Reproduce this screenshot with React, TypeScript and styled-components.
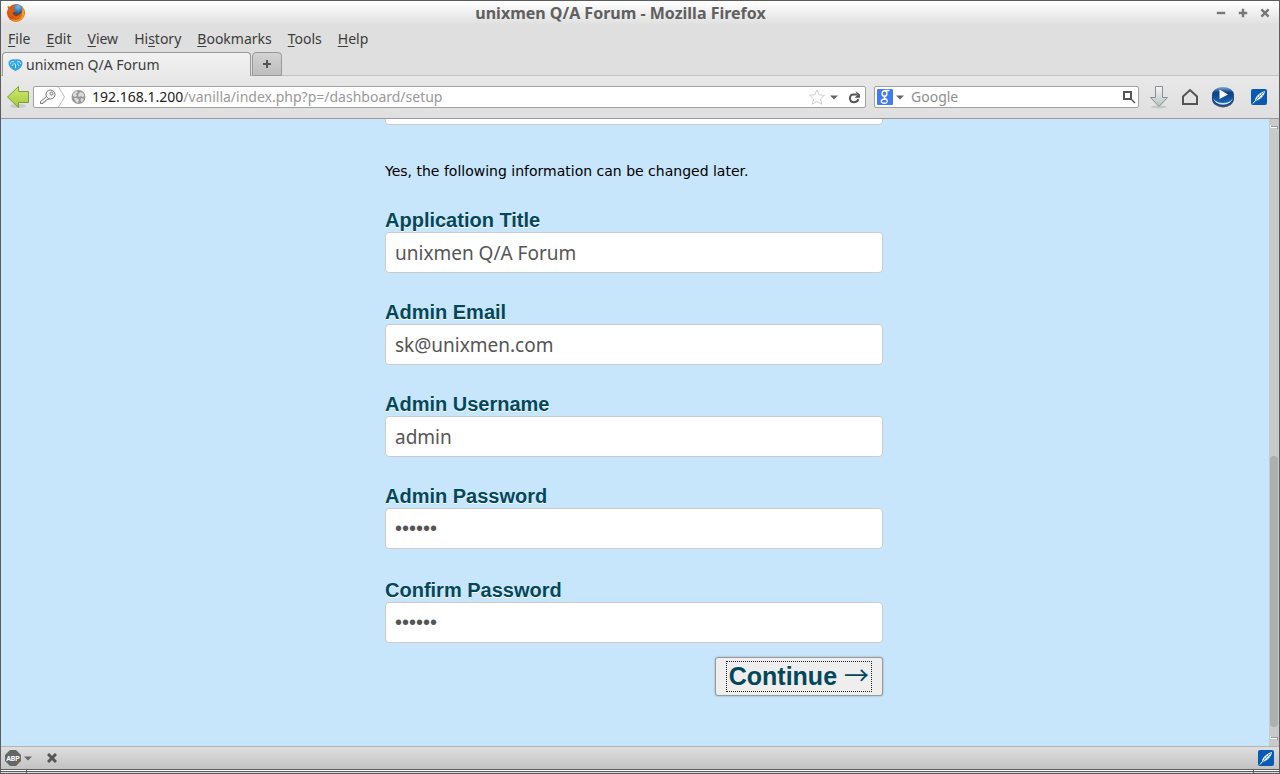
import React from "react";
import styled, { createGlobalStyle, css } from "styled-components";

const Global = createGlobalStyle`
  *, *::before, *::after { box-sizing: border-box; }
  body { margin: 0; font-family: "Noto Sans", "Open Sans", sans-serif; background: #dfdfdf; }
  button, input { font-family: inherit; }
  button { padding: 0; border: 0; background: none; color: inherit; }
  svg { display: block; flex: none; }
`;

const Window = styled.div`
  display: flex;
  flex-direction: column;
  height: 100vh;
  min-height: 480px;
  border: 1px solid #5c5c5c;
  border-bottom: 0;
  background: #dfdfdf;
  color: #3c3c3c;
  overflow: hidden;
`;

const TitleBar = styled.header`
  flex: none;
  display: flex;
  align-items: center;
  height: 24px;
  padding: 0 8px 0 5px;
  background: linear-gradient(#fff, #dfdfdf);
`;

const WindowTitle = styled.h1`
  flex: 1;
  margin: 0;
  font-size: 16px;
  line-height: 20px;
  font-weight: 700;
  text-align: center;
  color: #606060;
  white-space: nowrap;
`;

const WindowButtons = styled.div`
  display: flex;
  justify-content: flex-end;
  gap: 10px;
`;

const IconButton = styled.button`
  display: flex;
  flex: none;
  align-items: center;
  justify-content: center;
`;

const MenuBar = styled.nav`
  flex: none;
  display: flex;
  align-items: center;
  gap: 16px;
  height: 26px;
  padding: 2px 7px 0;
`;

const MenuItem = styled.button`
  font-size: 14px;
  line-height: 20px;
  color: #3c3c3c;
  u { text-underline-offset: 2px; }
`;

const TabStrip = styled.div`
  flex: none;
  display: flex;
  align-items: flex-end;
  gap: 1px;
  height: 25px;
  padding-left: 1px;
  box-shadow: inset 0 -1px #c3c3c3;
`;

const Tab = styled.button<{ $active?: boolean }>`
  display: flex;
  align-items: center;
  gap: 3px;
  height: 24px;
  border: 1px solid #999;
  border-radius: 4px 4px 0 0;
  font-size: 14px;
  line-height: 20px;
  color: #3c3c3c;
  ${(p) =>
    p.$active
      ? css`width: 249px; padding: 0 5px; border-bottom: 0; background: linear-gradient(#f2f2f2, #e8e8e8);`
      : css`width: 30px; justify-content: center; background: linear-gradient(#d2d2d2, #bebebe);`}
`;

const Toolbar = styled.div`
  flex: none;
  display: flex;
  align-items: center;
  height: 43px;
  padding: 0 12px 0 4px;
  border-bottom: 1px solid #9a9a9a;
  background: linear-gradient(#e8e8e8, #dfdfdf);
`;

const Field = styled.div`
  display: flex;
  align-items: center;
  height: 22px;
  border: 1px solid #a2a2a2;
  border-radius: 2px;
  background: #fff;
  overflow: hidden;
`;

const AddressField = styled(Field)`
  flex: 1;
  margin-left: 4px;
  padding-right: 4px;
`;

const SearchField = styled(Field)`
  flex: none;
  width: 265px;
  margin-left: 8px;
  padding: 0 2px;
`;

const Address = styled.div`
  flex: 1;
  margin-left: 6px;
  font-size: 14px;
  line-height: 20px;
  color: #999;
  white-space: nowrap;
  overflow: hidden;
  b { font-weight: 400; color: #222; }
`;

const SearchInput = styled.input`
  flex: 1;
  min-width: 0;
  margin-left: 4px;
  padding: 0;
  border: 0;
  font-size: 14px;
  line-height: 20px;
  background: none;
  &::placeholder { color: #8e8e8e; opacity: 1; }
`;

const ToolButtons = styled.div`
  display: flex;
  align-items: center;
  gap: 12px;
  margin-left: 10px;
`;

const AddonButton = styled(IconButton)`
  margin-left: 4px;
`;

const Viewport = styled.div`
  flex: 1;
  min-height: 0;
  display: flex;
  background: #c7e6fb;
`;

const Page = styled.main`
  flex: 1;
  min-width: 0;
  display: flex;
  flex-direction: column;
  justify-content: flex-end;
  align-items: center;
  padding-bottom: 50px;
  overflow: hidden;
`;

const Form = styled.form`
  flex: none;
  display: flex;
  flex-direction: column;
  width: 500px;
  max-width: 100%;
  padding-right: 2px;
`;

const TextBox = styled.input`
  width: 100%;
  height: 41px;
  padding: 0 9px;
  border: 1px solid #ccc;
  border-radius: 4px;
  background: #fff;
  font-size: 19px;
  color: #555;
  outline: none;
  &[type="password"] { font-family: "Liberation Sans", Arial, sans-serif; font-size: 20px; }
`;

const Note = styled.p`
  margin: 36px 0 27px;
  font-family: "DejaVu Sans", sans-serif;
  font-size: 14px;
  line-height: 20px;
  color: #000;
`;

const Row = styled.div<{ $gap?: number }>`
  display: flex;
  flex-direction: column;
  margin-bottom: ${(p) => p.$gap ?? 27}px;
`;

const Label = styled.label`
  font-family: "Liberation Sans", Arial, sans-serif;
  font-size: 20px;
  line-height: 24px;
  font-weight: 700;
  color: #02475a;
  text-shadow: 0 1px 0 #fff;
`;

const Continue = styled.button`
  display: flex;
  align-items: center;
  align-self: flex-end;
  height: 39px;
  padding: 0 10px;
  border: 1px solid #999;
  border-radius: 3px;
  background: #eee;
  box-shadow: 0 0 2px #999;
  font-family: "Liberation Sans", Arial, sans-serif;
  font-size: 25px;
  line-height: 29px;
  font-weight: 700;
  color: #02475a;
`;

const FocusRing = styled.span`
  height: 31px;
  padding: 0 2px;
  border: 1px dotted #222;
  white-space: nowrap;
`;

const Arrow = styled.span`
  font-family: "Noto Sans CJK JP", sans-serif;
  font-weight: 400;
  line-height: 1;
`;

const ScrollTrack = styled.div`
  flex: none;
  display: flex;
  flex-direction: column;
  align-items: center;
  width: 10px;
  padding: 6px 0;
  background: #c9c9c9;
`;

const ScrollThumb = styled.div`
  width: 8px;
  height: 44%;
  margin: auto 0 9px;
  border-radius: 4px;
  background: #afafaf;
`;

const StatusBar = styled.footer`
  flex: none;
  display: flex;
  align-items: center;
  height: 23px;
  padding: 0 5px 0 4px;
  border-top: 1px solid #b4b4b4;
  background: linear-gradient(#dedede, #c3c3c3);
`;

const CloseAddonBar = styled(IconButton)`
  margin: 0 auto 0 12px;
`;

const Frame = styled.div`
  flex: none;
  display: flex;
  justify-content: space-between;
  height: 5px;
  padding: 0 25px;
  border-top: 1px solid #5c5c5c;
  border-bottom: 1px solid #5c5c5c;
  background: linear-gradient(#fff 1px, #5c5c5c 1px, #5c5c5c 2px, #ddd 2px);
`;

const Notch = styled.span`
  width: 1px;
  background: #5c5c5c;
`;

const DropWrap = styled.span<{ $tight?: boolean }>`
  display: flex;
  padding: ${(p) => (p.$tight ? "0 3px" : "0 10px 0 5px")};
`;

const FirefoxIcon = () => (
  <svg width="20" height="20" viewBox="0 0 20 20" aria-hidden="true">
    <defs>
      <radialGradient id="globe" cx=".6" cy=".25" r=".7">
        <stop offset="0" stopColor="#6fc3ef" /><stop offset="1" stopColor="#1d4f93" />
      </radialGradient>
      <linearGradient id="fox" x1="0" y1="0" x2="1" y2="1">
        <stop offset="0" stopColor="#dd6a14" /><stop offset=".5" stopColor="#cf4b0d" /><stop offset="1" stopColor="#f39a1c" />
      </linearGradient>
    </defs>
    <circle cx="10" cy="10" r="9" fill="url(#fox)" />
    <path d="M14 2.500c3.500 2 4.800 5.500 4 9-.6 2.500-2 4.500-4 5.500 1.800-2.500 2.500-5 2-8-.3-2.500-1-4.500-2-6.500z" fill="#f8b52c" opacity=".75" />
    <circle cx="11" cy="6.500" r="5.300" fill="url(#globe)" />
    <path d="M1.500 3c1 .2 1.500.8 2.500 1.200C6 3.200 8 3.500 9 4.800c-1 .5-1.500 1.200-1 2l2 .8c-.8 1.200-2.300 1.400-3 2.200.2 2 2 2.800 3.800 2.400L9 15 3 13z" fill="#d85f14" />
    <path d="M7 9.800c.2 2 2 3 4 2.600 2-.5 3.500-2 3.600-4" fill="none" stroke="#8f2f08" />
    <path d="M3 14c3 3.500 10 4.500 14 0-2 5.500-11 6.500-14 0z" fill="#f8a92c" opacity=".6" />
  </svg>
);

const BackIcon = () => (
  <svg width="24" height="24" viewBox="0 0 24 24" aria-hidden="true">
    <defs><linearGradient id="green" x1="0" y1="0" x2="0" y2="1"><stop offset="0" stopColor="#d4e86e" /><stop offset="1" stopColor="#a3c93a" /></linearGradient></defs>
    <ellipse cx="13" cy="21" rx="8" ry="2" fill="#bbb" opacity=".6" />
    <path d="M2.500 12 13.500 1.500v5h10v11h-10v5z" fill="url(#green)" stroke="#7d9c45" strokeLinejoin="round" />
  </svg>
);

const IdentityIcon = () => (
  <svg width="36" height="20" viewBox="0 0 36 20" aria-hidden="true">
    <path d="M24.500 0l6 10-6 10" fill="none" stroke="#bbb" />
    <g fill="#f5f5f5" stroke="#777">
      <path d="M13 9 6.500 14.500v2H9l.5-1.500H11l.5-1.500L16 11.500" />
      <circle cx="16.500" cy="7.500" r="4.500" />
      <circle cx="17.500" cy="6.500" r="1.500" />
    </g>
  </svg>
);

const GlobeIcon = () => (
  <svg width="16" height="16" viewBox="0 0 16 16" aria-hidden="true">
    <circle cx="8.500" cy="8" r="7" fill="#989898" />
    <path d="M3 5l3-3 2 1-2 2 1 2-2 1-2-1zM10 3l3 1 1.500 3-2 1-1.500-1-2 1-1-2zM4 9l3 0 2 2-1 3-2-1zM11 9l3 1-2 3-1.500-1z" fill="#dcdcdc" />
  </svg>
);

const DropIcon = () => (
  <svg width="8" height="5" viewBox="0 0 8 5" aria-hidden="true"><path d="M0 .5h8L4 4.500z" fill="#666" /></svg>
);

const StarIcon = () => (
  <svg width="16" height="16" viewBox="0 0 16 16" aria-hidden="true">
    <path d="M8 .8l2.200 5 5.300.5-4 3.600 1.200 5.300L8 12.400l-4.700 2.800 1.200-5.300-4-3.600 5.300-.5z" fill="#fff" stroke="#cfcfcf" strokeLinejoin="round" />
  </svg>
);

const ReloadIcon = () => (
  <svg width="13" height="13" viewBox="0 0 13 13" aria-hidden="true">
    <path d="M9 3.500H5.500C3.300 3.500 2 5 2 7.200S3.500 11.200 6 11.200s4-1.200 4.300-3" fill="none" stroke="#555" strokeWidth="2" />
    <path d="M7.500 0 12 3.500v3.200H6.500L9.500 4z" fill="#555" />
  </svg>
);

const GoogleIcon = () => (
  <svg width="16" height="16" viewBox="0 0 16 16" aria-hidden="true">
    <rect width="16" height="16" rx="1" fill="#4279f6" />
    <g fill="none" stroke="#fff" strokeWidth="1.400">
      <ellipse cx="7.500" cy="4.500" rx="2.400" ry="2.800" />
      <path d="M8 1.500h4.500M8.500 7.200c-2 .8-1.500 1.600.2 2.600 2.600 1.500 1.800 4.500-1.400 4.500-3 0-4-2.300-2-3.600 1-.6 2.200-.7 3.200-.7" />
    </g>
  </svg>
);

const SearchIcon = () => (
  <svg width="14" height="14" viewBox="0 0 14 14" aria-hidden="true">
    <path d="M2 2h7v7H2z" fill="none" stroke="#555" strokeWidth="2" /><path d="M9 9l4 4" stroke="#555" strokeWidth="1.500" />
  </svg>
);

const DownloadIcon = () => (
  <svg width="20" height="24" viewBox="0 0 20 24" aria-hidden="true">
    <defs><linearGradient id="silver" x1="0" y1="0" x2="0" y2="1"><stop offset="0" stopColor="#f5f5f5" /><stop offset="1" stopColor="#b9c1c4" /></linearGradient></defs>
    <ellipse cx="10" cy="22" rx="8" ry="1.500" fill="#bbb" opacity=".7" />
    <path d="M6.500 1.500h7v11h5L10 21.500 1.500 12.500h5z" fill="url(#silver)" stroke="#8a8f90" strokeLinejoin="round" />
  </svg>
);

const HomeIcon = () => (
  <svg width="18" height="18" viewBox="0 0 18 18" aria-hidden="true">
    <path d="M2 16V8.500L9 2l7 6.500V16z" fill="none" stroke="#555" strokeWidth="2" />
  </svg>
);

const PlayIcon = () => (
  <svg width="24" height="22" viewBox="0 0 24 22" aria-hidden="true">
    <defs><linearGradient id="disc" x1="0" y1="0" x2="0" y2="1"><stop offset="0" stopColor="#7ba8d8" /><stop offset=".35" stopColor="#0b3f85" /><stop offset="1" stopColor="#1b65b8" /></linearGradient></defs>
    <ellipse cx="12" cy="13" rx="11" ry="8.500" fill="#4a5568" />
    <ellipse cx="12" cy="11.500" rx="11" ry="8.500" fill="#0b3f85" />
    <ellipse cx="12" cy="10.800" rx="10" ry="8" fill="#c4e6fa" />
    <ellipse cx="12" cy="9" rx="11" ry="8" fill="url(#disc)" />
    <path d="M8.500 3.500v9.500l8.500-4.500z" fill="#fff" />
  </svg>
);

const FeatherIcon = () => (
  <svg width="16" height="16" viewBox="0 0 16 16" aria-hidden="true">
    <rect width="16" height="16" rx="2" fill="#0a5ab4" />
    <path d="M4 12C3.500 8.500 8 3.500 14 2c-.5 4.500-5 9.500-10 10z" fill="#eef6fc" />
    <path d="M4 12 13 3" stroke="#0a5ab4" strokeWidth=".6" />
    <path d="M6.500 7.500v2M8.500 5.500v2M10.500 4v1.500M6.500 11h2M9 9h2M11 6.500h1.500" stroke="#4d8cce" strokeWidth=".6" />
    <path d="M2 14.500 4.500 11.500" stroke="#fff" />
  </svg>
);

const VanillaIcon = () => (
  <svg width="15" height="14" viewBox="0 0 15 14" aria-hidden="true">
    <path d="M7.500 13C3.500 11.500.5 8.500.5 5 .5 2 4 .5 7.500 1.500 11 .5 14.500 2 14.500 5c0 3.500-3 6.500-7 8z" fill="#35a5e8" />
    <path d="M2.500 6c0-2 2-3 3.500-2M4 8c1-2 2-3 3.500-2v4M12.500 6c0-2-2-3-3.500-2M11 8c-1-1.500-1-2-2-2" fill="none" stroke="#c6ebff" />
  </svg>
);

const AbpIcon = () => (
  <svg width="16" height="16" viewBox="0 0 16 16" aria-hidden="true">
    <path d="M5 0h6l5 5v6l-5 5H5l-5-5V5z" fill="#666" />
    <text x="8" y="11" textAnchor="middle" fontFamily="Roboto, Liberation Sans" fontSize="7" fontWeight="700" fill="#fff">ABP</text>
  </svg>
);

const Glyph = ({ d, size = 10, color = "#777", width = 2 }: { d: string; size?: number; color?: string; width?: number }) => (
  <svg width={size} height={size} viewBox="0 0 10 10" aria-hidden="true">
    <path d={d} stroke={color} strokeWidth={width} fill="none" />
  </svg>
);

const StepMark = () => (
  <svg width="8" height="4" viewBox="0 0 8 4" aria-hidden="true">
    <path d="M.5 0v2.500H7" fill="none" stroke="#fff" /><path d="M1 1.500h6.500V4" fill="none" stroke="#999" />
  </svg>
);

const menus = ["File", "Edit", "View", "History", "Bookmarks", "Tools", "Help"];

const MenuText = ({ text }: { text: string }) => {
  const at = text === "History" ? 2 : 0;
  return <>{text.slice(0, at)}<u>{text[at]}</u>{text.slice(at + 1)}</>;
};

const fields = [
  { id: "title", label: "Application Title", type: "text", value: "unixmen Q/A Forum" },
  { id: "email", label: "Admin Email", type: "email", value: "sk@unixmen.com" },
  { id: "name", label: "Admin Username", type: "text", value: "admin" },
  { id: "password", label: "Admin Password", type: "password", value: "secret", gap: 29 },
  { id: "confirm", label: "Confirm Password", type: "password", value: "secret", gap: 14 },
];

export default function App() {
  return (
    <>
      <Global />
      <Window>
        <TitleBar>
          <FirefoxIcon />
          <WindowTitle>unixmen Q/A Forum - Mozilla Firefox</WindowTitle>
          <WindowButtons>
            <IconButton aria-label="Minimize"><Glyph size={12} d="M1.500 5h7" /></IconButton>
            <IconButton aria-label="Maximize"><Glyph size={12} d="M1.500 5h7M5 1.500v7" /></IconButton>
            <IconButton aria-label="Close"><Glyph size={12} d="M2 2l6 6M8 2 2 8" /></IconButton>
          </WindowButtons>
        </TitleBar>
        <MenuBar>
          {menus.map((m) => <MenuItem key={m}><MenuText text={m} /></MenuItem>)}
        </MenuBar>
        <TabStrip>
          <Tab $active><VanillaIcon />unixmen Q/A Forum</Tab>
          <Tab aria-label="New tab"><Glyph d="M1 5h8M5 1v8" color="#555" /></Tab>
        </TabStrip>
        <Toolbar>
          <IconButton aria-label="Back"><BackIcon /></IconButton>
          <AddressField>
            <IconButton aria-label="Site identity"><IdentityIcon /></IconButton>
            <GlobeIcon />
            <Address><b>192.168.1.200</b>/vanilla/index.php?p=/dashboard/setup</Address>
            <IconButton aria-label="Bookmark this page"><StarIcon /></IconButton>
            <IconButton aria-label="Show history"><DropWrap><DropIcon /></DropWrap></IconButton>
            <IconButton aria-label="Reload"><ReloadIcon /></IconButton>
          </AddressField>
          <SearchField>
            <GoogleIcon />
            <IconButton aria-label="Choose search engine"><DropWrap $tight><DropIcon /></DropWrap></IconButton>
            <SearchInput aria-label="Search" placeholder="Google" />
            <IconButton aria-label="Search"><SearchIcon /></IconButton>
          </SearchField>
          <ToolButtons>
            <IconButton aria-label="Downloads"><DownloadIcon /></IconButton>
            <IconButton aria-label="Home"><HomeIcon /></IconButton>
            <IconButton aria-label="Play"><PlayIcon /></IconButton>
            <AddonButton aria-label="Notes"><FeatherIcon /></AddonButton>
          </ToolButtons>
        </Toolbar>
        <Viewport>
          <Page>
            <Form onSubmit={(e) => e.preventDefault()}>
              <TextBox type="password" aria-label="Database password" />
              <Note>Yes, the following information can be changed later.</Note>
              {fields.map((f) => (
                <Row key={f.id} $gap={f.gap}>
                  <Label htmlFor={f.id}>{f.label}</Label>
                  <TextBox id={f.id} type={f.type} defaultValue={f.value} />
                </Row>
              ))}
              <Continue type="submit"><FocusRing>Continue <Arrow>→</Arrow></FocusRing></Continue>
            </Form>
          </Page>
          <ScrollTrack>
            <StepMark />
            <ScrollThumb />
            <StepMark />
          </ScrollTrack>
        </Viewport>
        <StatusBar>
          <IconButton aria-label="Adblock Plus"><AbpIcon /><DropWrap $tight><DropIcon /></DropWrap></IconButton>
          <CloseAddonBar aria-label="Close add-on bar"><Glyph d="M1 1l8 8M9 1 1 9" color="#555" width={3} /></CloseAddonBar>
          <IconButton aria-label="Notes"><FeatherIcon /></IconButton>
        </StatusBar>
        <Frame><Notch /><Notch /></Frame>
      </Window>
    </>
  );
}
